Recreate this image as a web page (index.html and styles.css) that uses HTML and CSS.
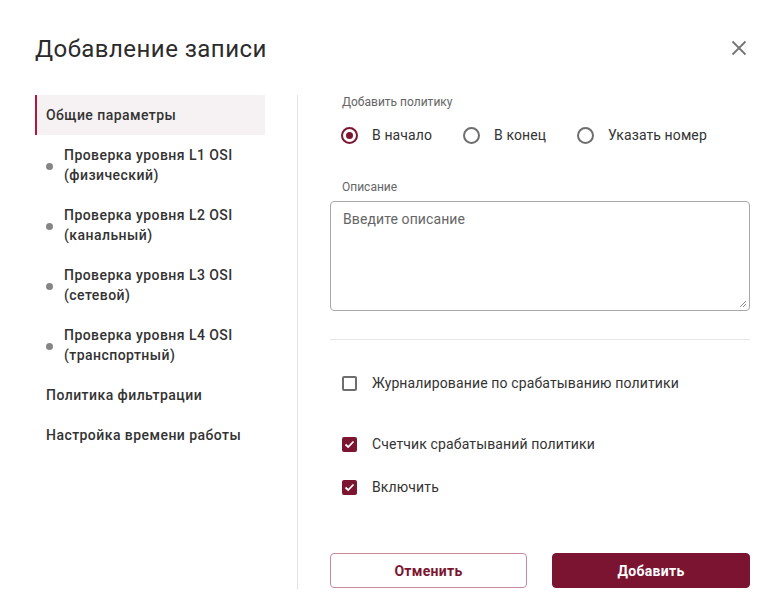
FILE: index.html
```html
<!DOCTYPE html>
<html lang="ru">
<head>
<meta charset="utf-8">
<title>Добавление записи</title>
<link rel="stylesheet" href="styles.css">
</head>
<body>
<div class="dialog">
  <div class="header">
    <h1 class="title">Добавление записи</h1>
    <button class="close" aria-label="Закрыть">
      <svg width="16" height="16" viewBox="0 0 16 16"><path d="M1.5 1.5 L14.5 14.5 M14.5 1.5 L1.5 14.5" stroke="#757575" stroke-width="1.8" fill="none"/></svg>
    </button>
  </div>
  <div class="body">
    <nav class="nav">
      <div class="nav-item active">Общие параметры</div>
      <div class="nav-item sub"><span class="dot"></span><span>Проверка уровня L1 OSI<br>(физический)</span></div>
      <div class="nav-item sub"><span class="dot"></span><span>Проверка уровня L2 OSI<br>(канальный)</span></div>
      <div class="nav-item sub"><span class="dot"></span><span>Проверка уровня L3 OSI<br>(сетевой)</span></div>
      <div class="nav-item sub"><span class="dot"></span><span>Проверка уровня L4 OSI<br>(транспортный)</span></div>
      <div class="nav-item">Политика фильтрации</div>
      <div class="nav-item">Настройка времени работы</div>
    </nav>
    <div class="divider"></div>
    <div class="content">
      <div class="label">Добавить политику</div>
      <div class="radios">
        <label class="radio checked"><span class="circle"></span>В начало</label>
        <label class="radio"><span class="circle"></span>В конец</label>
        <label class="radio"><span class="circle"></span>Указать номер</label>
      </div>
      <div class="label label-desc">Описание</div>
      <div class="textarea">
        <span class="placeholder">Введите описание</span>
        <svg class="grip" width="8" height="8" viewBox="0 0 8 8"><path d="M7 1 L1 7 M7 4 L4 7" stroke="#8a8a8a" stroke-width="1" fill="none"/></svg>
      </div>
      <div class="hr"></div>
      <label class="check check-first"><span class="box"></span>Журналирование по срабатыванию политики</label>
      <label class="check check-second checked"><span class="box"><svg width="11" height="9" viewBox="0 0 11 9"><path d="M1.5 4.5 L4.2 7 L9.5 1.5" stroke="#fff" stroke-width="1.8" fill="none"/></svg></span>Счетчик срабатываний политики</label>
      <label class="check check-third checked"><span class="box"><svg width="11" height="9" viewBox="0 0 11 9"><path d="M1.5 4.5 L4.2 7 L9.5 1.5" stroke="#fff" stroke-width="1.8" fill="none"/></svg></span>Включить</label>
      <div class="buttons">
        <button class="btn btn-cancel">Отменить</button>
        <button class="btn btn-add">Добавить</button>
      </div>
    </div>
  </div>
</div>
</body>
</html>
```

FILE: styles.css
```css
* { box-sizing: border-box; }
html, body { margin: 0; padding: 0; background: #fff; }
body {
  font-family: Roboto, "Liberation Sans", Arial, sans-serif;
  color: #333;
  width: 784px;
  height: 616px;
  overflow: hidden;
}
.dialog { padding: 33px 34px 0 35px; }
.header {
  display: flex;
  justify-content: space-between;
  align-items: center;
  height: 32px;
}
.title {
  margin: 0;
  font-size: 24px;
  line-height: 32px;
  font-weight: 400;
  color: #2b2b2b;
  letter-spacing: 0.45px;
}
.close {
  border: 0;
  background: none;
  padding: 0;
  width: 16px;
  height: 16px;
  margin-right: 3px;
  margin-top: -2px;
  display: flex;
}
.body {
  display: grid;
  grid-template-columns: 230px 1px 420px;
  column-gap: 32px;
  margin-top: 29px;
}
.nav { display: flex; flex-direction: column; margin-top: 1px; }
.nav-item {
  font-size: 14px;
  font-weight: 500;
  line-height: 20px;
  color: #333;
  padding: 10px 0 10px 9px;
  border-left: 2px solid transparent;
  letter-spacing: 0.45px;
}
.nav-item.active {
  background: #f6f2f3;
  border-left-color: #b3193f;
}
.nav-item.sub {
  display: flex;
  align-items: center;
  gap: 11px;
}
.dot {
  width: 7px;
  height: 7px;
  border-radius: 50%;
  background: #858585;
  flex: none;
  margin-top: 2px;
}
.divider { background: #e2e2e2; height: 494px; margin-top: 1px; }
.content { display: flex; flex-direction: column; }
.label {
  font-size: 12px;
  line-height: 16px;
  color: #666;
  padding-left: 12px;
}
.radios {
  display: flex;
  gap: 31px;
  margin-top: 15px;
  padding-left: 11px;
}
.radio {
  display: flex;
  align-items: center;
  gap: 14px;
  font-size: 14px;
  line-height: 20px;
  color: #333;
  letter-spacing: 0.1px;
}
.circle {
  width: 17px;
  height: 17px;
  border-radius: 50%;
  border: 2px solid #6e6e6e;
  display: flex;
  align-items: center;
  justify-content: center;
}
.radio.checked .circle { border-color: #7b1530; }
.radio.checked .circle::after {
  content: "";
  width: 7px;
  height: 7px;
  border-radius: 50%;
  background: #7b1530;
}
.label-desc { margin-top: 34px; }
.textarea {
  position: relative;
  margin-top: 6px;
  height: 110px;
  border: 1px solid #a8a8a8;
  border-radius: 4px;
  padding: 7px 12px;
}
.placeholder { font-size: 14px; line-height: 20px; color: #666; letter-spacing: 0.1px; }
.grip { position: absolute; right: 2px; bottom: 2px; }
.hr { margin-top: 28px; height: 1px; background: #e6e6e6; }
.check {
  display: flex;
  align-items: center;
  gap: 15px;
  font-size: 14px;
  line-height: 20px;
  color: #333;
  padding-left: 12px;
  letter-spacing: 0.13px;
}
.check-first { margin-top: 33px; }
.check-second { margin-top: 41px; }
.check-third { margin-top: 23px; }
.box {
  width: 15px;
  height: 15px;
  border: 2px solid #6e6e6e;
  border-radius: 2px;
  display: flex;
  align-items: center;
  justify-content: center;
}
.check.checked .box { background: #7b1530; border-color: #7b1530; }
.buttons {
  display: grid;
  grid-template-columns: 197px 1fr;
  column-gap: 25px;
  margin-top: 56px;
}
.btn {
  height: 35px;
  border-radius: 4px;
  font-family: Roboto, "Liberation Sans", Arial, sans-serif;
  font-size: 14px;
  font-weight: 700;
  letter-spacing: 0.3px;
}
.btn-cancel { background: #fff; color: #7b1530; border: 1px solid #c88a9b; }
.btn-add { background: #7b1430; color: #fff; border: 1px solid #7b1430; }
```
